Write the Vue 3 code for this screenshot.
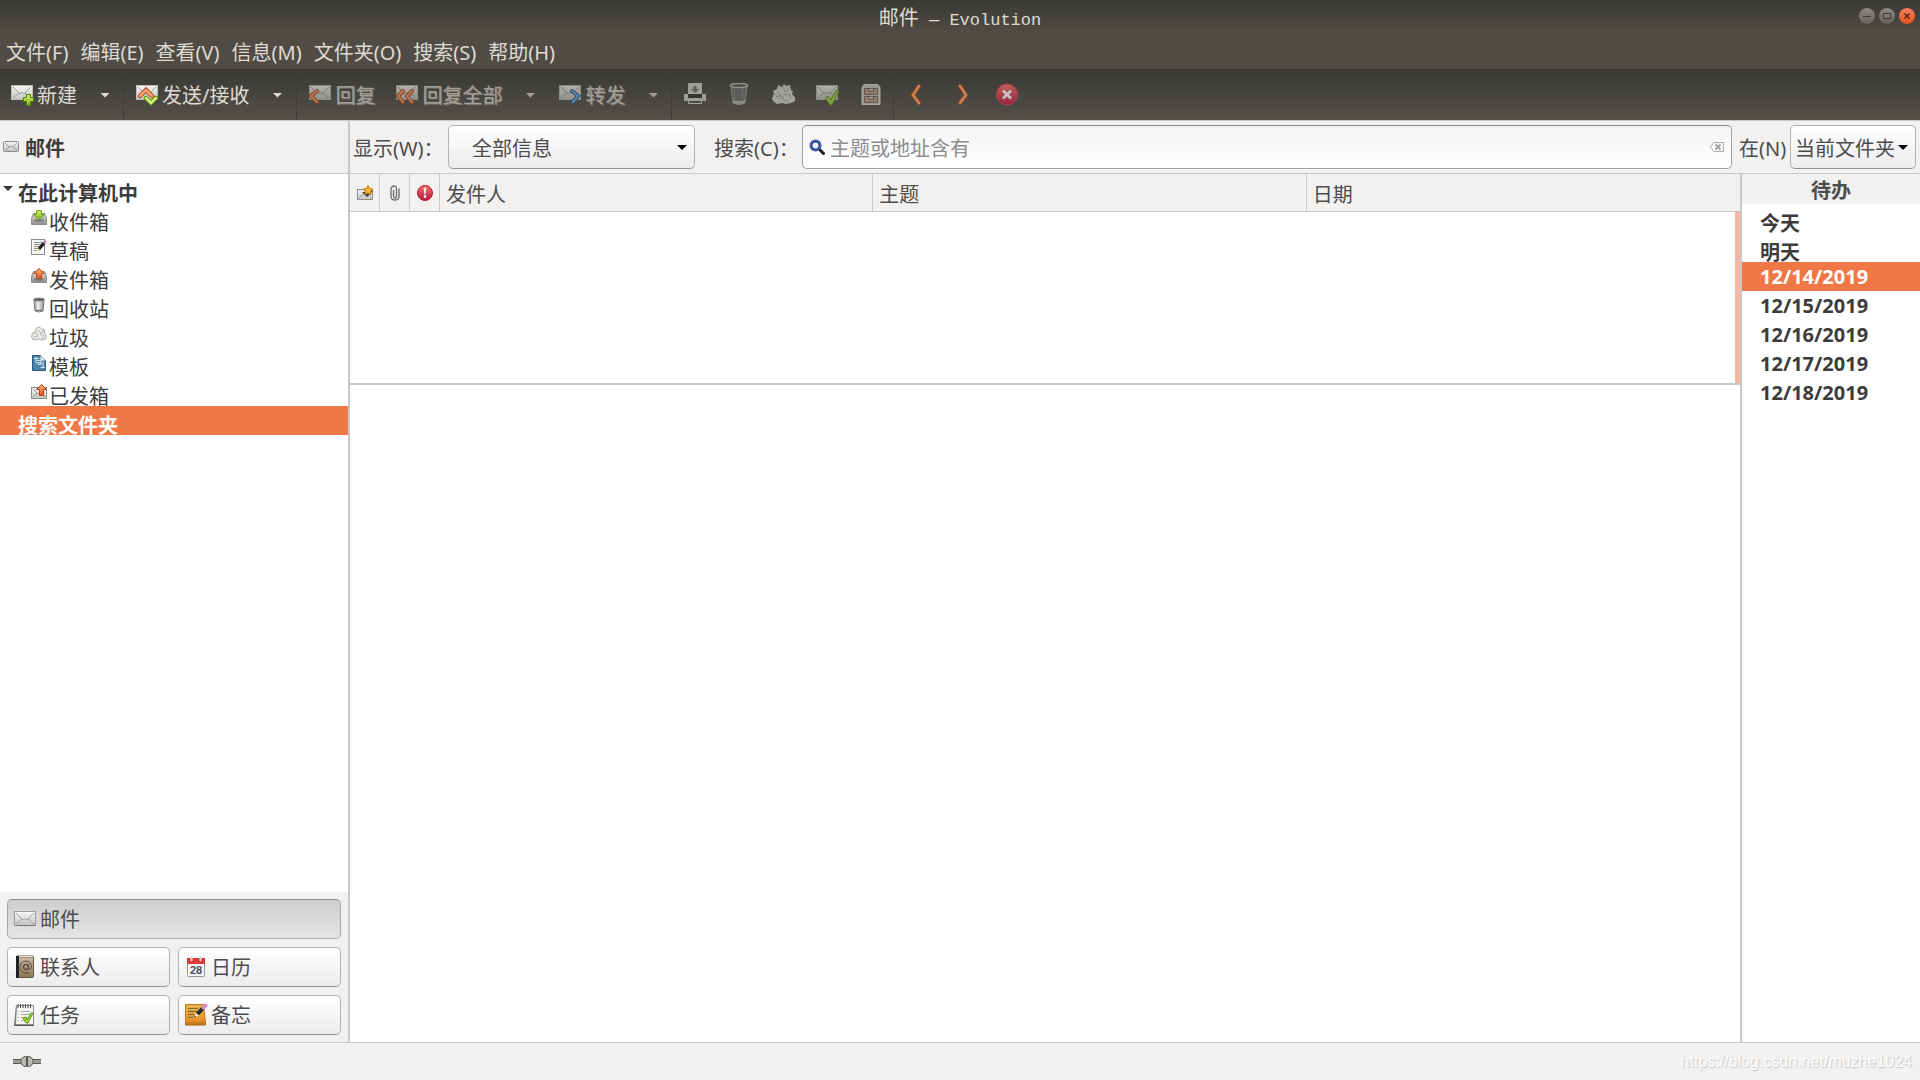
<script setup>
import { ref } from 'vue'

const menus = ['文件(F)', '编辑(E)', '查看(V)', '信息(M)', '文件夹(O)', '搜索(S)', '帮助(H)']

const iconTools = [
  { icon: 'print', label: '打印' },
  { icon: 'trash', label: '删除' },
  { icon: 'junk', label: '垃圾邮件' },
  { icon: 'notjunk', label: '非垃圾邮件' },
  { icon: 'archive', label: '归档' },
]
const navTools = [
  { icon: 'prev', label: '上一封' },
  { icon: 'next', label: '下一封' },
  { icon: 'stop', label: '停止' },
]

const folders = [
  { icon: 'inbox', name: '收件箱' },
  { icon: 'drafts', name: '草稿' },
  { icon: 'outbox', name: '发件箱' },
  { icon: 'bin', name: '回收站' },
  { icon: 'junk-small', name: '垃圾' },
  { icon: 'template', name: '模板' },
  { icon: 'sent', name: '已发箱' },
]

const views = [
  { icon: 'mail', name: '邮件' },
  { icon: 'contacts', name: '联系人' },
  { icon: 'calendar', name: '日历', day: '28' },
  { icon: 'tasks', name: '任务' },
  { icon: 'memos', name: '备忘' },
]
const activeView = ref('邮件')

const days = ['今天', '明天', '12/14/2019', '12/15/2019', '12/16/2019', '12/17/2019', '12/18/2019']
const selectedDay = ref('12/14/2019')
const isDate = (d) => d.includes('/')

const query = ref('')
</script>

<template>
  <div class="window">
    <svg class="sprite" width="0" height="0" aria-hidden="true">
      <defs>
        <linearGradient id="g-paper" x1="0" y1="0" x2="0" y2="1">
          <stop offset="0" stop-color="#f8f8f8" /><stop offset="1" stop-color="#c4c5c2" />
        </linearGradient>
        <linearGradient id="g-orange" x1="0" y1="0" x2="0" y2="1">
          <stop offset="0" stop-color="#ffb27a" /><stop offset="1" stop-color="#e2501c" />
        </linearGradient>
        <linearGradient id="g-green" x1="0" y1="0" x2="0" y2="1">
          <stop offset="0" stop-color="#d6ef6a" /><stop offset="1" stop-color="#7cb21c" />
        </linearGradient>
        <linearGradient id="g-red" x1="0" y1="0" x2="0" y2="1">
          <stop offset="0" stop-color="#f4706a" /><stop offset="1" stop-color="#b8133c" />
        </linearGradient>
        <linearGradient id="g-tray" x1="0" y1="0" x2="0" y2="1">
          <stop offset="0" stop-color="#dcdcda" /><stop offset="1" stop-color="#8e908c" />
        </linearGradient>
        <linearGradient id="g-book" x1="0" y1="0" x2="0" y2="1">
          <stop offset="0" stop-color="#cdbba4" /><stop offset="1" stop-color="#8d7558" />
        </linearGradient>
        <linearGradient id="g-memo" x1="0" y1="0" x2="0" y2="1">
          <stop offset="0" stop-color="#e9b950" /><stop offset="1" stop-color="#e58a26" />
        </linearGradient>
        <linearGradient id="g-bin" x1="0" y1="0" x2="1" y2="0">
          <stop offset="0" stop-color="#8b8d8a" /><stop offset=".4" stop-color="#f2f2f2" /><stop offset="1" stop-color="#8b8d8a" />
        </linearGradient>
      </defs>

      <symbol id="i-mail" viewBox="0 0 24 24">
        <rect x="1.500" y="4.500" width="21" height="14" fill="url(#g-paper)" stroke="#9a9c98" />
        <path d="M2 18.500h20" stroke="#777976" />
        <path d="M3 6l7 7 2-1 2 1 7-7M3 17l6-5M21 17l-6-5" fill="none" stroke="#a2a4a0" />
      </symbol>
      <symbol id="i-env" viewBox="0 0 24 24">
        <rect x="1.500" y="2.500" width="21" height="14" fill="url(#g-paper)" stroke="#b9bab7" />
        <path d="M3 4l7 7 2-2 2 2 7-7M3 15l6-5M21 15l-6-5" fill="none" stroke="#9b9d99" />
      </symbol>
      <symbol id="i-new" viewBox="0 0 24 24">
        <use href="#i-env" />
        <path d="M16.500 11.500h4v3h3v4h-3v4h-4v-4h-3v-4h3z" fill="url(#g-green)" stroke="#4e8207" />
      </symbol>
      <symbol id="i-sendrecv" viewBox="0 0 24 24">
        <use href="#i-env" />
        <path d="M5 13l6-6 6 6" fill="none" stroke="#b84414" stroke-width="4.500" stroke-linecap="round" />
        <path d="M5 13l6-6 6 6" fill="none" stroke="#f9a377" stroke-width="2.500" stroke-linecap="round" />
        <path d="M11 15l5 5 5-5" fill="none" stroke="#568a0c" stroke-width="4.500" stroke-linecap="round" />
        <path d="M11 15l5 5 5-5" fill="none" stroke="#d8f47c" stroke-width="2.500" stroke-linecap="round" />
      </symbol>
      <symbol id="i-reply" viewBox="0 0 24 24">
        <use href="#i-env" />
        <path d="M9 8l-6 5 6 6" fill="none" stroke="#b9400f" stroke-width="4" stroke-linecap="round" />
        <path d="M9 8l-6 5 6 6" fill="none" stroke="#fa9d68" stroke-width="2" stroke-linecap="round" />
      </symbol>
      <symbol id="i-replyall" viewBox="0 0 24 24">
        <use href="#i-env" />
        <path d="M8 8l-5 5 5 6M17 8l-5 5 5 6" fill="none" stroke="#b9400f" stroke-width="4" stroke-linecap="round" />
        <path d="M8 8l-5 5 5 6M17 8l-5 5 5 6" fill="none" stroke="#fa9d68" stroke-width="2" stroke-linecap="round" />
      </symbol>
      <symbol id="i-forward" viewBox="0 0 24 24">
        <use href="#i-env" />
        <path d="M14 8l6 5-5 6" fill="none" stroke="#1d5c96" stroke-width="4" stroke-linecap="round" />
        <path d="M14 8l6 5-5 6" fill="none" stroke="#69acde" stroke-width="2" stroke-linecap="round" />
      </symbol>
      <symbol id="i-print" viewBox="0 0 24 24">
        <path d="M5 0h14v13H5z" fill="#dcdcda" />
        <path d="M10.500 3h3v3h3l-4.500 4-4.500-4h3z" fill="#777" />
        <path d="M1 11h4v3h14v-3h4v7H1z" fill="#d6d6d3" />
        <path d="M5 11h14v4H5z" fill="#2b2b29" />
        <path d="M5.500 18v2.500h13V18" fill="none" stroke="#e4e4e2" />
        <path d="M19 16h2" stroke="#8ace6c" />
      </symbol>
      <symbol id="i-trash" viewBox="0 0 24 24">
        <path d="M4 3l2 17q6 3 12 0l2-17z" fill="#83868a" fill-opacity=".6" stroke="#a3a5a2" />
        <path d="M6 17q6 2 12 0v3q-6 3-12 0z" fill="#b9bbb8" />
        <path d="M7 5l1 11M16 5l-1 11" stroke="#b3b5b2" opacity=".5" />
        <ellipse cx="12" cy="2.500" rx="8.500" ry="2" fill="#494b48" stroke="#c5c6c3" stroke-width="1.500" />
      </symbol>
      <symbol id="i-junk" viewBox="0 0 24 24">
        <path d="M1 16l2-6-1-2 4-2 1-4 4 2 2-3 2 2 4-1 1 5 2 1-1 3 3 3v4l-4 2-5 1-4-1-5 1-3-2z" fill="#dededb" />
        <path d="M6 8l4 4-5 2M12 4l2 5 4-3M14 12l4-1 2 5M8 16l3-3 3 6M3 11l3 1M15 16l3 3" stroke="#a5a7a2" fill="none" />
      </symbol>
      <symbol id="i-notjunk" viewBox="0 0 24 24">
        <use href="#i-env" />
        <path d="M10 15l3-2 3 4 5-10 3 1-7 14h-2z" fill="#a8d646" stroke="#5d8b17" />
      </symbol>
      <symbol id="i-archive" viewBox="0 0 24 24">
        <path d="M5 1.500h14l2 3v17H3v-17z" fill="#cecfcb" stroke="#eaeae7" />
        <path d="M5.500 5.500h13v6h-13zM5.500 13.500h13v6h-13z" fill="#c5a283" stroke="#766552" />
        <path d="M9.500 6v2h5V6M9.500 14v2h5v-2" fill="#eee" stroke="#575550" />
      </symbol>
      <symbol id="i-prev" viewBox="0 0 24 24">
        <path d="M14 3l-6 9 6 8" fill="none" stroke="#b54312" stroke-width="4" stroke-linecap="round" />
        <path d="M14 3l-6 9 6 8" fill="none" stroke="#ff9c5c" stroke-width="2.500" stroke-linecap="round" />
      </symbol>
      <symbol id="i-next" viewBox="0 0 24 24">
        <path d="M10 3l6 9-6 8" fill="none" stroke="#b54312" stroke-width="4" stroke-linecap="round" />
        <path d="M10 3l6 9-6 8" fill="none" stroke="#ff9c5c" stroke-width="2.500" stroke-linecap="round" />
      </symbol>
      <symbol id="i-stop" viewBox="0 0 24 24">
        <circle cx="12" cy="11.500" r="10.500" fill="url(#g-red)" stroke="#d8434a" />
        <path d="M8 7.500l8 8M16 7.500l-8 8" stroke="#fff" stroke-width="2.500" />
      </symbol>

      <symbol id="i-mail-small" viewBox="0 0 16 16">
        <rect x=".5" y="2.500" width="15" height="10" rx="1" fill="url(#g-paper)" stroke="#8b8d89" />
        <path d="M2 4l4 4 2-1 2 1 4-4M2 11l4-3M14 11l-4-3" fill="none" stroke="#999b97" />
      </symbol>
      <symbol id="i-inbox" viewBox="0 0 16 16">
        <path d="M.5 8.500l2-5h11l2 5v6H.5z" fill="url(#g-tray)" stroke="#8b8d89" />
        <path d="M3 9.500h10l-1 2H4z" fill="#747672" />
        <path d="M5.500.5h5v4h3L8 9.500 2.500 4.500h3z" fill="url(#g-green)" stroke="#74a51c" />
      </symbol>
      <symbol id="i-outbox" viewBox="0 0 16 16">
        <path d="M.5 8.500l2-5h11l2 5v6H.5z" fill="url(#g-tray)" stroke="#8b8d89" />
        <path d="M3 10.500h10l-1 2H4z" fill="#747672" />
        <path d="M5.500 10.500v-5h-3L8 .5l5.500 5h-3v5z" fill="url(#g-orange)" stroke="#b65024" />
      </symbol>
      <symbol id="i-drafts" viewBox="0 0 16 16">
        <rect x=".5" y=".5" width="13" height="15" fill="#f5f5f4" stroke="#8b8d89" />
        <path d="M3 3.500h8M3 5.500h8M3 7.500h6M3 9.500h4M3 11.500h2" stroke="#8b8d89" />
        <path d="M5 12.500l1.500-4 3 2.500z" fill="#d8cf70" />
        <path d="M8 10l5-6" stroke="#20201f" stroke-width="3" />
        <path d="M13 4l2-2" stroke="#c681b8" stroke-width="3" />
      </symbol>
      <symbol id="i-bin" viewBox="0 0 16 16">
        <path d="M3 3l1 11q4 2 8 0l1-11z" fill="url(#g-bin)" stroke="#777976" />
        <path d="M5 13q3 1 6 0" stroke="#676966" fill="none" />
        <ellipse cx="8" cy="2.500" rx="5.500" ry="1.500" fill="#555754" stroke="#92948f" />
      </symbol>
      <symbol id="i-junk-small" viewBox="0 0 16 16">
        <path d="M.5 11l1-4 3-1 1-4 3-1 2 2 3 1v3l2 3-1 3-4 1-3-1-5 1z" fill="#e9e9e6" stroke="#aaaca7" />
        <path d="M4 6l3 4-4 1M7 4l3 3 3-2M9 8l4 2-2 3" stroke="#b5b7b2" fill="none" />
      </symbol>
      <symbol id="i-template" viewBox="0 0 16 16">
        <path d="M1.500.5h8l5 5v10h-13z" fill="#4c87ab" stroke="#2c5a78" />
        <path d="M9.500.5l5 5h-5z" fill="#e7eef2" />
        <path d="M3 3.500h5M5 2v6h2M6 5.500h4v4H7.500v-2H10M12 7v6M9.500 12.500H14" stroke="#d0e2ec" fill="none" />
      </symbol>
      <symbol id="i-sent" viewBox="0 0 16 16">
        <rect x=".5" y="3.500" width="15" height="11" fill="url(#g-paper)" stroke="#8b8d89" />
        <path d="M2 13l4-4M2 5l5 5 5 0M14 13l-4-4" fill="none" stroke="#999b97" />
        <path d="M8.500 11.500v-6h-3l5-5 5 5h-3v6z" fill="url(#g-orange)" stroke="#b64218" />
      </symbol>
      <symbol id="i-status" viewBox="0 0 16 16">
        <rect x=".5" y="4.500" width="15" height="10" fill="url(#g-paper)" stroke="#8b8d89" />
        <path d="M2 13l4-4 2 1 2-1 4 4" fill="none" stroke="#999b97" />
        <path d="M5 7l5 5 6-6z" fill="#3b3c39" />
        <path d="M11 .5l1.500 3 3 .5-2 2.500.5 3-3-1.500-3 1.500.5-3-2-2.500 3-.5z" fill="#f8b82d" stroke="#c27c09" />
      </symbol>
      <symbol id="i-clip" viewBox="0 0 16 16">
        <path d="M6.500 5v6q0 2 1.500 2t1.500-2V3.500Q9.500 1 7 1T4 4v7.500Q4 15 8 15t4-4V3.500" fill="none" stroke="#696b68" stroke-width="1.300" />
      </symbol>
      <symbol id="i-alert" viewBox="0 0 16 16">
        <circle cx="8" cy="8" r="7.500" fill="url(#g-red)" stroke="#b21d30" />
        <path d="M7 3h2l-.5 6h-1zM7 10.500h2v2H7z" fill="#fff" stroke="#fff" stroke-width=".5" />
      </symbol>
      <symbol id="i-search" viewBox="0 0 16 16">
        <path d="M10 10l4.500 4.500" stroke="#1c1c1c" stroke-width="3" stroke-linecap="round" />
        <circle cx="6.500" cy="6.500" r="4.500" fill="#eef2fb" stroke="#29418f" stroke-width="3" />
        <circle cx="6.500" cy="6.500" r="5" fill="none" stroke="#5878c8" />
      </symbol>
      <symbol id="i-clear" viewBox="0 0 16 12">
        <path d="M5 1.500h9.500v9H5L1.500 6z" fill="#fafafa" stroke="#a9a9a7" />
        <path d="M6.500 3.500l5 5M11.500 3.500l-5 5" stroke="#a0a09e" stroke-width="2" />
      </symbol>

      <symbol id="i-contacts" viewBox="0 0 24 24">
        <rect x="3.500" y="1.500" width="17" height="21" rx="1" fill="url(#g-book)" stroke="#6b5842" />
        <path d="M4 .5h16v2H4z" fill="#e8e4dd" stroke="#6b5842" stroke-width=".5" />
        <path d="M3 1h3v22H3z" fill="#1e2326" />
        <circle cx="13" cy="12" r="2.500" fill="none" stroke="#5d4f40" stroke-width="1.300" />
        <path d="M15.500 9.500v4q2 2 3-1 0-6-5.500-6.500-6 .5-6 6.500 1 6 7 5.500l2-.5" fill="none" stroke="#5d4f40" />
      </symbol>
      <symbol id="i-calendar" viewBox="0 0 24 24">
        <rect x="3.500" y="3.500" width="17" height="18" rx="1" fill="#f5f5f5" stroke="#969696" />
        <path d="M3 3h18v6H3z" fill="#dc3a36" />
        <path d="M7.500 1v5M16.500 1v5" stroke="#ddd" stroke-width="2" />
      </symbol>
      <symbol id="i-tasks" viewBox="0 0 24 24">
        <path d="M3 3h17l1 20H1z" fill="#555753" />
        <path d="M3.500 2.500h17v19h-18z" fill="#f5f5f4" stroke="#8b8d89" />
        <path d="M5 1v4M7.500 1v4M10 1v4M12.500 1v4M15 1v4M17.500 1v4" stroke="#4b4d4a" />
        <path d="M8 8.500h9M8 11.500h9M8 14.500h6M8 17.500h4M5 8.500h1M5 11.500h1M5 14.500h1M5 17.500h1" stroke="#a8aaa6" />
        <path d="M10 15l3-1 1 3 4-7h2l-5 10h-2z" fill="#a5d738" stroke="#61961b" />
      </symbol>
      <symbol id="i-memos" viewBox="0 0 24 24">
        <path d="M1.500 19h17l3-1v4h-20z" fill="#c47d21" stroke="#a46310" />
        <path d="M1.500 1.500h18l2 18h-20z" fill="url(#g-memo)" stroke="#bd7a1f" />
        <path d="M4 5.500h10M4 8.500h9M4 11.500h6M4 14.500h5" stroke="#7e6b34" />
        <path d="M10 14.500l2-5 3.500 3z" fill="#f1e7bd" />
        <path d="M10 14.500l.7-2 1.400 1.200z" fill="#222" />
        <path d="M13.500 11l6-6.500" stroke="#23262b" stroke-width="4" />
        <path d="M19.500 4.500l2-2" stroke="#d58fc2" stroke-width="4" stroke-linecap="round" />
      </symbol>
      <symbol id="i-online" viewBox="0 0 28 14">
        <path d="M0 4.500h8M0 8.500h8M20 4.500h8M20 8.500h8" stroke="#555753" />
        <path d="M0 6.500h8M20 6.500h8" stroke="#9a9c98" stroke-width="3" />
        <path d="M13.500 1.500q-5.500 0-5.500 5t5.500 5z" fill="#b9bbb7" stroke="#555753" />
        <path d="M14.500 1.500q5.500 0 5.500 5t-5.500 5z" fill="#b9bbb7" stroke="#555753" />
      </symbol>
    </svg>

    <header class="titlebar">
      <h1 class="title">邮件<span class="title-app">&nbsp;— Evolution</span></h1>
      <div class="window-controls">
        <button class="control" type="button" aria-label="最小化">
          <svg viewBox="0 0 16 16"><path d="M4 8.500h8" stroke="#3b3a36" /></svg>
        </button>
        <button class="control" type="button" aria-label="最大化">
          <svg viewBox="0 0 16 16"><rect x="4.500" y="5.500" width="7" height="5" fill="none" stroke="#3b3a36" /></svg>
        </button>
        <button class="control close" type="button" aria-label="关闭">
          <svg viewBox="0 0 16 16"><path d="M5.500 5.500l5 5M10.500 5.500l-5 5" stroke="#4a2010" stroke-width="1.300" /></svg>
        </button>
      </div>
    </header>

    <nav class="menubar">
      <button v-for="m in menus" :key="m" type="button" class="menu">{{ m }}</button>
    </nav>

    <div class="toolbar" role="toolbar">
      <button type="button" class="tool first"><svg class="ico24"><use href="#i-new" /></svg><span class="caption">新建</span></button>
      <button type="button" class="drop" aria-label="新建选项"><i class="caret"></i></button>
      <span class="sep"></span>
      <button type="button" class="tool"><svg class="ico24"><use href="#i-sendrecv" /></svg><span class="caption">发送/接收</span></button>
      <button type="button" class="drop" aria-label="收发选项"><i class="caret"></i></button>
      <span class="sep wide"></span>
      <button type="button" class="tool" disabled><svg class="ico24"><use href="#i-reply" /></svg><span class="caption">回复</span></button>
      <button type="button" class="tool after-tool" disabled><svg class="ico24"><use href="#i-replyall" /></svg><span class="caption">回复全部</span></button>
      <button type="button" class="drop" aria-label="回复选项" disabled><i class="caret"></i></button>
      <button type="button" class="tool after-drop" disabled><svg class="ico24"><use href="#i-forward" /></svg><span class="caption">转发</span></button>
      <button type="button" class="drop" aria-label="转发选项" disabled><i class="caret"></i></button>
      <span class="sep tight"></span>
      <button v-for="t in iconTools" :key="t.icon" type="button" class="icon-tool" :aria-label="t.label" disabled>
        <svg class="ico24"><use :href="'#i-' + t.icon" /></svg>
      </button>
      <span class="sep flush"></span>
      <button v-for="t in navTools" :key="t.icon" type="button" class="icon-tool nav" :aria-label="t.label" disabled>
        <svg class="ico24"><use :href="'#i-' + t.icon" /></svg>
      </button>
    </div>

    <div class="workspace">
      <aside class="sidebar">
        <h2 class="side-title"><svg class="ico16"><use href="#i-mail-small" /></svg><span class="low">邮件</span></h2>
        <ul class="tree">
          <li class="row root"><i class="caret expander"></i><span class="label">在此计算机中</span></li>
          <li v-for="f in folders" :key="f.name" class="row folder">
            <svg class="ico16"><use :href="'#i-' + f.icon" /></svg><span class="label">{{ f.name }}</span>
          </li>
          <li class="row root selected"><span class="label">搜索文件夹</span></li>
        </ul>
        <div class="switcher">
          <button
            v-for="v in views"
            :key="v.name"
            type="button"
            class="view"
            :class="{ active: v.name === activeView }"
            @click="activeView = v.name"
          >
            <span class="view-icon">
              <svg class="ico24"><use :href="'#i-' + v.icon" /></svg>
              <span v-if="v.day" class="day-number">{{ v.day }}</span>
            </span>
            <span class="caption">{{ v.name }}</span>
          </button>
        </div>
      </aside>

      <section class="content">
        <form class="filterbar" @submit.prevent>
          <label class="show-label low" for="show">显示(W)：</label>
          <div class="combo show">
            <select id="show"><option>全部信息</option></select>
            <i class="caret"></i>
          </div>
          <label class="search-label low" for="query">搜索(C)：</label>
          <div class="search">
            <svg class="search-icon"><use href="#i-search" /></svg>
            <input id="query" v-model="query" class="low" type="text" placeholder="主题或地址含有" />
            <button type="button" class="clear" aria-label="清除" @click="query = ''">
              <svg><use href="#i-clear" /></svg>
            </button>
          </div>
          <label class="scope-label low" for="scope">在(N)</label>
          <div class="combo scope">
            <select id="scope"><option>当前文件夹</option></select>
            <i class="caret"></i>
          </div>
        </form>

        <div class="panes">
          <div class="mail">
            <div class="message-list">
              <table>
                <colgroup>
                  <col class="c-icon" /><col class="c-icon" /><col class="c-icon" />
                  <col /><col /><col />
                </colgroup>
                <thead>
                  <tr>
                    <th class="ico-cell" aria-label="状态"><svg class="ico16"><use href="#i-status" /></svg></th>
                    <th class="ico-cell" aria-label="附件"><svg class="ico16"><use href="#i-clip" /></svg></th>
                    <th class="ico-cell" aria-label="重要"><svg class="ico16"><use href="#i-alert" /></svg></th>
                    <th>发件人</th>
                    <th>主题</th>
                    <th>日期</th>
                  </tr>
                </thead>
              </table>
              <div class="rows"></div>
            </div>
            <div class="preview"></div>
          </div>
          <aside class="todo">
            <h2 class="todo-title">待办</h2>
            <ul>
              <li
                v-for="d in days"
                :key="d"
                class="day"
                :class="{ selected: d === selectedDay, date: isDate(d) }"
                @click="selectedDay = d"
              >{{ d }}</li>
            </ul>
          </aside>
        </div>
      </section>
    </div>

    <footer class="statusbar">
      <svg class="online"><use href="#i-online" /></svg>
      <span class="watermark">https://blog.csdn.net/muzhe1024</span>
    </footer>
  </div>
</template>

<style>
body {
  margin: 0;
  background: #f2f1f0;
}
</style>

<style scoped>
.window {
  display: flex;
  flex-direction: column;
  min-height: 100vh;
  background: #f2f1f0;
  color: #3c3c3c;
  font: 20px/28px "Noto Sans", "Noto Sans CJK SC", sans-serif;
  white-space: nowrap;
}
.window *,
.window *::before {
  box-sizing: border-box;
}
.sprite {
  position: absolute;
}
button,
select,
input {
  margin: 0;
  padding: 0;
  border: 0;
  background: none;
  color: inherit;
  font: inherit;
}
h1,
h2,
ul {
  margin: 0;
  padding: 0;
  font-size: inherit;
  list-style: none;
}
svg {
  display: block;
  flex: none;
}
.ico24 {
  width: 24px;
  height: 24px;
}
.ico16 {
  width: 16px;
  height: 16px;
}
.caret {
  flex: none;
  width: 10px;
  height: 5px;
  background: currentColor;
  clip-path: polygon(0 0, 100% 0, 50% 100%);
}
.caption {
  padding-top: 2px;
}
.low {
  padding-top: 4px;
}

.titlebar {
  display: grid;
  grid-template-columns: 1fr auto 1fr;
  align-items: center;
  height: 32px;
  padding: 0 5px;
  background: linear-gradient(#3a3935, #504c45);
  color: #dfdbd2;
}
.title {
  grid-column: 2;
  padding-top: 4px;
  font-weight: 400;
}
.title-app {
  font-family: "Liberation Mono", monospace;
  font-size: 17px;
}
.window-controls {
  display: flex;
  justify-content: flex-end;
  align-self: start;
  gap: 4px;
  padding-top: 8px;
}
.control {
  width: 16px;
  height: 16px;
  border-radius: 50%;
  background: linear-gradient(#8c8983, #66635c);
  box-shadow: 0 0 1px #2c2b28;
}
.control.close {
  background: linear-gradient(#f58260, #e5501c);
}

.menubar {
  display: flex;
  gap: 12px;
  height: 37px;
  padding: 0 6px;
  background: #504c45;
  color: #dfdbd2;
}
.menu {
  padding-top: 4px;
}

.toolbar {
  display: flex;
  align-items: center;
  height: 52px;
  border-top: 1px solid #33322e;
  border-bottom: 1px solid #c9c8c6;
  background: linear-gradient(#3a3935, #53504a);
  color: #dfdbd2;
}
.tool {
  display: flex;
  align-items: center;
  gap: 3px;
  height: 44px;
  margin-left: 11px;
}
.tool.first {
  margin-left: 10px;
}
.tool.after-tool {
  margin-left: 20px;
}
.tool.after-drop {
  margin-left: 13px;
}
.drop {
  display: flex;
  justify-content: center;
  align-items: center;
  width: 30px;
  height: 44px;
  margin-left: 13px;
}
.toolbar button:disabled {
  opacity: 0.6;
  text-shadow: 1px 1px 0 #a09c95;
}
.icon-tool {
  display: flex;
  justify-content: center;
  align-items: center;
  width: 44px;
  height: 44px;
}
.toolbar .icon-tool.nav:disabled {
  width: 45px;
  opacity: 0.7;
}
.sep {
  align-self: stretch;
  width: 1px;
  margin-left: 3px;
  background: #3e3d39;
}
.sep.wide {
  margin-left: 4px;
}
.sep.tight {
  margin-right: 1px;
}
.sep.flush {
  margin-left: 0;
}

.workspace {
  display: flex;
  flex: 1;
}
.sidebar {
  display: flex;
  flex-direction: column;
  width: 350px;
  border-right: 2px solid #c9c8c6;
}
.side-title {
  display: flex;
  align-items: center;
  gap: 6px;
  height: 53px;
  padding-left: 3px;
  border-bottom: 1px solid #c9c8c6;
}
.tree {
  flex: 1;
  background: #fff;
}
.row {
  display: flex;
  align-items: center;
  height: 29px;
}
.row .label {
  padding-top: 10px;
}
.root {
  position: relative;
  padding-left: 18px;
  font-weight: 700;
}
.expander {
  position: absolute;
  left: 3px;
  top: 12px;
}
.folder {
  gap: 2px;
  padding-left: 31px;
}
.selected {
  background: #f07746;
  color: #fff;
}
.switcher {
  display: grid;
  grid-template-columns: 1fr 1fr;
  gap: 8px;
  padding: 7px;
}
.view {
  display: flex;
  align-items: center;
  gap: 3px;
  height: 40px;
  padding-left: 5px;
  border: 1px solid #b4b2b0;
  border-bottom-color: #949290;
  border-radius: 5px;
  background: linear-gradient(#fff, #edebec);
  color: #4c4c4c;
}
.view.active {
  grid-column: 1 / -1;
  border-color: #8f8e8c #a9a8a6 #b0aead;
  background: linear-gradient(#cdcdcd, #e4e4e4);
}
.view-icon {
  position: relative;
}
.day-number {
  position: absolute;
  inset: 9px 0 auto;
  font: bold 11px/13px "Liberation Sans", Arial, sans-serif;
  text-align: center;
}

.content {
  display: flex;
  flex: 1;
  flex-direction: column;
  min-width: 0;
}
.filterbar {
  display: flex;
  align-items: center;
  height: 53px;
  padding: 0 4px 0 3px;
  border-bottom: 1px solid #c9c8c6;
  color: #4c4c4c;
}
.combo {
  position: relative;
  height: 44px;
}
.combo select {
  width: 100%;
  height: 44px;
  padding-top: 3px;
  border: 1px solid #b4b2b0;
  border-bottom-color: #949290;
  border-radius: 5px;
  background: linear-gradient(#fff, #edebec);
  appearance: none;
}
.combo .caret {
  position: absolute;
  top: 20px;
  right: 8px;
  color: #000;
  pointer-events: none;
}
.show-label {
  width: 95px;
}
.combo.show {
  width: 247px;
}
.combo.show select {
  padding-left: 23px;
}
.search-label {
  width: 88px;
  margin-left: 19px;
}
.search {
  display: flex;
  flex: 1;
  align-items: center;
  gap: 5px;
  height: 44px;
  padding: 0 6px;
  border: 1px solid #a3a2a0;
  border-top-color: #8c8b89;
  border-radius: 5px;
  background: linear-gradient(#f4f4f4, #fff);
}
.search-icon {
  width: 16px;
  height: 16px;
}
.search input {
  flex: 1;
  min-width: 0;
  outline: 0;
}
.search input::placeholder {
  color: #8c8c8c;
  opacity: 1;
}
.clear svg {
  width: 16px;
  height: 12px;
}
.scope-label {
  width: 51px;
  margin-left: 7px;
}
.combo.scope {
  width: 126px;
}
.combo.scope select {
  padding-left: 4px;
}

.panes {
  display: flex;
  flex: 1;
}
.mail {
  display: flex;
  flex: 1;
  flex-direction: column;
}
.message-list {
  border-bottom: 2px solid #c9c8c6;
}
table {
  width: 100%;
  table-layout: fixed;
  border-collapse: separate;
  border-spacing: 0;
}
.c-icon {
  width: 30px;
}
th {
  height: 38px;
  padding: 4px 0 0 6px;
  border-right: 1px solid #c9c8c6;
  border-bottom: 1px solid #c9c8c6;
  color: #4c4c4c;
  font-weight: 400;
  text-align: left;
}
th:last-child {
  border-right: 0;
}
.ico-cell {
  padding: 0 0 0 7px;
}
.rows {
  height: 171px;
  border-right: 5px solid #f7b7a0;
  background: #fff;
}
.preview {
  flex: 1;
  background: #fff;
}
.todo {
  width: 180px;
  border-left: 2px solid #c9c8c6;
  background: #fff;
}
.todo-title {
  height: 30px;
  padding-top: 3px;
  background: #f2f1f0;
  color: #4c4c4c;
  text-align: center;
}
.day {
  height: 29px;
  padding: 6px 0 0 18px;
  font-weight: 700;
}
.day.date {
  padding-top: 1px;
}

.statusbar {
  display: flex;
  align-items: center;
  justify-content: space-between;
  height: 38px;
  padding: 0 8px 0 13px;
  border-top: 1px solid #c9c8c6;
}
.online {
  width: 28px;
  height: 14px;
}
.watermark {
  color: #fcfcfc;
  font: 16px/20px "Liberation Sans", Arial, sans-serif;
  text-shadow: 1px 1px 1px #c4c4c4;
}
</style>
